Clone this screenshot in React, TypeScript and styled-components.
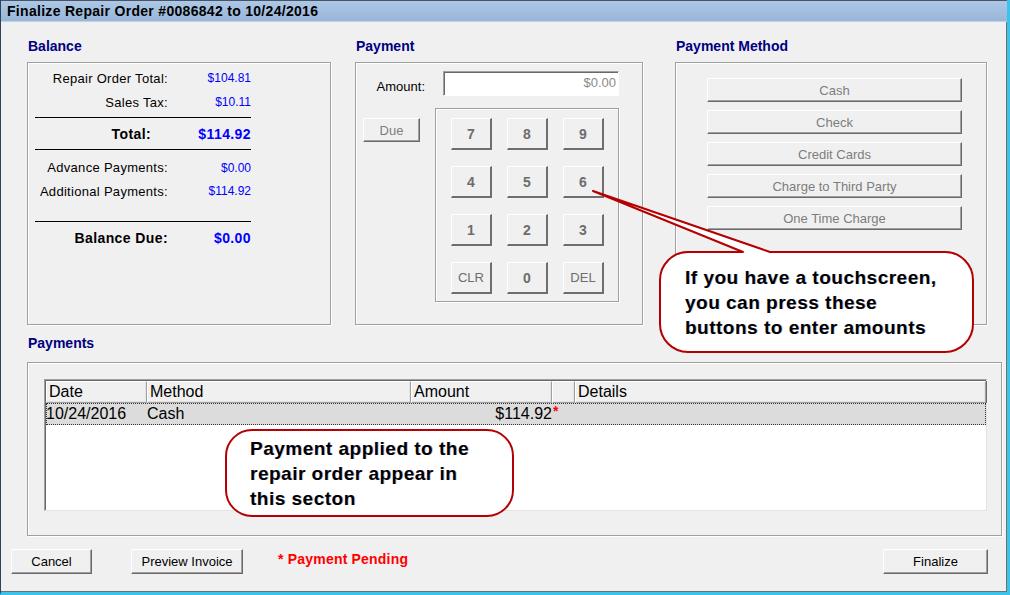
import React from 'react';
import styled, { createGlobalStyle } from 'styled-components';

const GlobalStyle = createGlobalStyle`
  html, body {
    margin: 0;
    padding: 0;
    background: #f0f0f0;
  }
  body {
    font-family: "Liberation Sans", Arial, sans-serif;
    font-size: 13px;
    color: #000;
  }
`;

const Window = styled.div`
  position: relative;
  width: 1010px;
  height: 595px;
  box-sizing: border-box;
  background: #f0f0f0;
  border-left: 1px solid #2e4258;
  border-right: 3px solid #3cc3ec;
  border-bottom: 3px solid #3cc3ec;
  box-shadow: inset -1px -1px 0 #707070;
  display: flex;
  flex-direction: column;
  overflow: hidden;
`;

const TitleBar = styled.div`
  height: 22px;
  flex: none;
  box-sizing: border-box;
  padding-left: 6px;
  display: flex;
  align-items: center;
  background: linear-gradient(#adc8e6, #98b6d8);
  border-top: 1px solid #4a5563;
  border-bottom: 1px solid #c3d3e4;
  font-weight: bold;
  font-size: 14px;
  letter-spacing: 0.3px;
  color: #000;
`;

const TopRow = styled.div`
  display: flex;
  padding: 16px 0 0 26px;
`;

const Section = styled.div<{ $width: number; $gap?: number }>`
  width: ${p => p.$width}px;
  margin-right: ${p => p.$gap ?? 0}px;
  display: flex;
  flex-direction: column;
`;

const Heading = styled.div<{ $space?: number }>`
  height: 16px;
  line-height: 16px;
  font-size: 14px;
  font-weight: bold;
  color: #000080;
  padding-left: 1px;
  margin-bottom: ${p => p.$space ?? 8}px;
`;

const GroupBox = styled.div<{ $height: number }>`
  height: ${p => p.$height}px;
  box-sizing: border-box;
  border: 1px solid #a0a0a0;
  box-shadow: 1px 1px 0 #fff, inset 1px 1px 0 #fff;
`;

/* Balance */

const BalanceList = styled.div`
  width: 216px;
  margin: 3px 0 0 7px;
`;

const BalanceRow = styled.div<{ $bold?: boolean; $height?: number; $top?: number; $labelPad?: number }>`
  display: grid;
  grid-template-columns: 133px 83px;
  align-items: center;
  height: ${p => p.$height ?? 24}px;
  margin-top: ${p => p.$top ?? 0}px;
  font-weight: ${p => (p.$bold ? 'bold' : 'normal')};
  font-size: ${p => (p.$bold ? 14 : 13)}px;
  letter-spacing: ${p => (p.$bold ? 0.4 : 0.3)}px;

  & > span:first-child {
    text-align: right;
    padding-right: ${p => p.$labelPad ?? 0}px;
  }
`;

const Money = styled.span<{ $bold?: boolean }>`
  text-align: right;
  color: #0000ff;
  font-size: ${p => (p.$bold ? 14 : 12)}px;
  letter-spacing: ${p => (p.$bold ? 0.4 : 0)}px;
`;

const Rule = styled.div<{ $top: number }>`
  height: 1px;
  background: #000;
  margin-top: ${p => p.$top}px;
`;

/* Payment */

const PaymentInner = styled.div`
  padding-top: 8px;
`;

const AmountRow = styled.div`
  display: flex;
  align-items: flex-start;
`;

const AmountLabel = styled.label`
  width: 69px;
  text-align: right;
  margin: 8px 18px 0 0;
`;

const AmountInput = styled.div`
  width: 176px;
  height: 25px;
  box-sizing: border-box;
  background: #fff;
  border-top: 1px solid #a0a0a0;
  border-left: 1px solid #a0a0a0;
  border-right: 1px solid #fff;
  border-bottom: 1px solid #fff;
  box-shadow: inset 1px 1px 0 #696969;
  color: #8a8a8a;
  text-align: right;
  padding: 3px 2px 0 0;
`;

const PadRow = styled.div`
  display: flex;
  align-items: flex-start;
  margin-top: 12px;
`;

const Button = styled.button<{ $w: number; $h?: number; $dim?: boolean; $bold?: boolean }>`
  width: ${p => p.$w}px;
  height: ${p => p.$h ?? 25}px;
  box-sizing: border-box;
  padding: 0;
  background: #f0f0f0;
  border-top: 1px solid #fff;
  border-left: 1px solid #fff;
  border-right: 1px solid #696969;
  border-bottom: 1px solid #696969;
  box-shadow: inset -1px -1px 0 #a0a0a0;
  font-family: "Liberation Sans", Arial, sans-serif;
  font-size: ${p => (p.$bold ? 14 : 13)}px;
  font-weight: ${p => (p.$bold ? 'bold' : 'normal')};
  color: ${p => (p.$dim ? '#7d7d7d' : '#000')};
  flex: none;
`;

const DueButton = styled(Button)`
  margin: 10px 15px 0 7px;
`;

const Keypad = styled.div`
  width: 184px;
  height: 194px;
  box-sizing: border-box;
  border: 1px solid #a0a0a0;
  box-shadow: 1px 1px 0 #fff, inset 1px 1px 0 #fff;
  padding: 9px 0 0 15px;
  display: grid;
  grid-template-columns: repeat(3, 41px);
  grid-auto-rows: 32px;
  column-gap: 15px;
  row-gap: 16px;
`;

const Key = styled(Button)`
  border-right-width: 2px;
  border-bottom-width: 2px;
  border-right-color: #6e6e6e;
  border-bottom-color: #6e6e6e;
  box-shadow: none;
  color: #6d6d6d;
`;

/* Payment method */

const MethodList = styled.div`
  display: flex;
  flex-direction: column;
  gap: 8px;
  padding: 15px 0 0 31px;
`;

/* Payments table */

const PaymentsSection = styled.div`
  display: flex;
  flex-direction: column;
  padding: 10px 0 0 26px;
`;

const PaymentsBox = styled(GroupBox)`
  width: 975px;
  padding: 16px 0 0 16px;
`;

const Table = styled.div`
  width: 943px;
  height: 132px;
  box-sizing: border-box;
  background: #fff;
  border-top: 1px solid #a0a0a0;
  border-left: 1px solid #a0a0a0;
  border-right: 1px solid #e3e3e3;
  border-bottom: 1px solid #e3e3e3;
  box-shadow: inset 1px 1px 0 #696969;
  padding: 1px 0 0 1px;
  font-size: 16px;
`;

const cols = '101px 264px 141px 23px 1fr';

const HeaderRow = styled.div`
  display: grid;
  grid-template-columns: ${cols};
  height: 22px;
`;

const HeaderCell = styled.div`
  box-sizing: border-box;
  background: #f0f0f0;
  border-top: 1px solid #fff;
  border-left: 1px solid #fff;
  border-right: 1px solid #a0a0a0;
  border-bottom: 1px solid #a0a0a0;
  box-shadow: inset -1px -1px 0 #e3e3e3, 1px 0 0 #696969;
  padding-left: 2px;
  line-height: 20px;
  white-space: nowrap;
  overflow: hidden;
`;

const DataRow = styled.div`
  display: grid;
  grid-template-columns: ${cols};
  height: 22px;
  box-sizing: border-box;
  background: #dcdcdc;
  outline: 1px dotted #333;
  outline-offset: -1px;
  line-height: 22px;
`;

const Cell = styled.div<{ $right?: boolean }>`
  padding-left: 0;
  text-align: ${p => (p.$right ? 'right' : 'left')};
  white-space: nowrap;
`;

const Star = styled.span`
  color: #ff0000;
  font-weight: bold;
  font-size: 14px;
  vertical-align: top;
  line-height: 16px;
  padding-left: 1px;
`;

/* Bottom */

const BottomBar = styled.div`
  display: flex;
  align-items: center;
  margin-top: 13px;
  padding-left: 10px;
`;

const Pending = styled.span`
  margin-left: 35px;
  color: #ff0000;
  font-weight: bold;
  font-size: 14px;
  letter-spacing: 0.2px;
  margin-top: -6px;
`;

const Spacer = styled.div`
  flex: 1;
`;

/* Callouts */

const Overlay = styled.svg`
  position: absolute;
  left: -1px;
  top: 0;
  pointer-events: none;
`;

const CalloutText = styled.div<{ $x: number; $y: number }>`
  position: absolute;
  left: ${p => p.$x}px;
  top: ${p => p.$y}px;
  font-size: 19px;
  font-weight: bold;
  letter-spacing: 0.5px;
  line-height: 25px;
  color: #000;
  white-space: nowrap;
  text-shadow: 1px 0 0 rgba(40, 40, 140, 0.25);
`;

const keys = ['7', '8', '9', '4', '5', '6', '1', '2', '3', 'CLR', '0', 'DEL'];
const methods = ['Cash', 'Check', 'Credit Cards', 'Charge to Third Party', 'One Time Charge'];

const calloutOne =
  'M 743 252 L 593 191 L 770 252 L 945 252 A 28 28 0 0 1 973 280 L 973 324 A 28 28 0 0 1 945 352 ' +
  'L 688 352 A 28 28 0 0 1 660 324 L 660 280 A 28 28 0 0 1 688 252 Z';

const calloutTwo =
  'M 252 430 L 487 430 A 26 26 0 0 1 513 456 L 513 490 A 26 26 0 0 1 487 516 L 252 516 ' +
  'A 26 26 0 0 1 226 490 L 226 456 A 26 26 0 0 1 252 430 Z';

export default function App() {
  return (
    <>
      <GlobalStyle />
      <Window>
        <TitleBar>Finalize Repair Order #0086842 to 10/24/2016</TitleBar>

        <TopRow>
          <Section $width={304} $gap={24}>
            <Heading>Balance</Heading>
            <GroupBox $height={263}>
              <BalanceList>
                <BalanceRow>
                  <span>Repair Order Total:</span>
                  <Money>$104.81</Money>
                </BalanceRow>
                <BalanceRow>
                  <span>Sales Tax:</span>
                  <Money>$10.11</Money>
                </BalanceRow>
                <Rule $top={3} />
                <BalanceRow $bold $top={4} $labelPad={17}>
                  <span>Total:</span>
                  <Money $bold>$114.92</Money>
                </BalanceRow>
                <Rule $top={3} />
                <BalanceRow $top={6} $height={23}>
                  <span>Advance Payments:</span>
                  <Money>$0.00</Money>
                </BalanceRow>
                <BalanceRow>
                  <span>Additional Payments:</span>
                  <Money>$114.92</Money>
                </BalanceRow>
                <Rule $top={18} />
                <BalanceRow $bold $top={4}>
                  <span>Balance Due:</span>
                  <Money $bold>$0.00</Money>
                </BalanceRow>
              </BalanceList>
            </GroupBox>
          </Section>

          <Section $width={288} $gap={32}>
            <Heading>Payment</Heading>
            <GroupBox $height={263}>
              <PaymentInner>
                <AmountRow>
                  <AmountLabel>Amount:</AmountLabel>
                  <AmountInput>$0.00</AmountInput>
                </AmountRow>
                <PadRow>
                  <DueButton $w={57} $h={24} $dim>Due</DueButton>
                  <Keypad>
                    {keys.map(k => (
                      <Key key={k} $w={41} $h={32} $bold={k.length === 1} $dim>
                        {k}
                      </Key>
                    ))}
                  </Keypad>
                </PadRow>
              </PaymentInner>
            </GroupBox>
          </Section>

          <Section $width={312}>
            <Heading>Payment Method</Heading>
            <GroupBox $height={263}>
              <MethodList>
                {methods.map(m => (
                  <Button key={m} $w={255} $h={24} $dim>
                    {m}
                  </Button>
                ))}
              </MethodList>
            </GroupBox>
          </Section>
        </TopRow>

        <PaymentsSection>
          <Heading $space={11}>Payments</Heading>
          <PaymentsBox $height={174}>
            <Table>
              <HeaderRow>
                <HeaderCell>Date</HeaderCell>
                <HeaderCell>Method</HeaderCell>
                <HeaderCell>Amount</HeaderCell>
                <HeaderCell />
                <HeaderCell>Details</HeaderCell>
              </HeaderRow>
              <DataRow>
                <Cell>10/24/2016</Cell>
                <Cell>Cash</Cell>
                <Cell $right>$114.92</Cell>
                <Cell>
                  <Star>*</Star>
                </Cell>
                <Cell />
              </DataRow>
            </Table>
          </PaymentsBox>
        </PaymentsSection>

        <BottomBar>
          <Button $w={81}>Cancel</Button>
          <Button $w={112} style={{ marginLeft: 39 }}>Preview Invoice</Button>
          <Pending>* Payment Pending</Pending>
          <Spacer />
          <Button $w={105} style={{ marginRight: 19 }}>Finalize</Button>
        </BottomBar>

        <Overlay width={1010} height={595} viewBox="0 0 1010 595">
          <path d={calloutOne} fill="#fff" stroke="#b40000" strokeWidth={2} strokeLinejoin="round" />
          <path d={calloutTwo} fill="#fff" stroke="#b40000" strokeWidth={2} />
        </Overlay>
        <CalloutText $x={684} $y={265}>
          If you have a touchscreen,
          <br />
          you can press these
          <br />
          buttons to enter amounts
        </CalloutText>
        <CalloutText $x={249} $y={436}>
          Payment applied to the
          <br />
          repair order appear in
          <br />
          this secton
        </CalloutText>
      </Window>
    </>
  );
}
